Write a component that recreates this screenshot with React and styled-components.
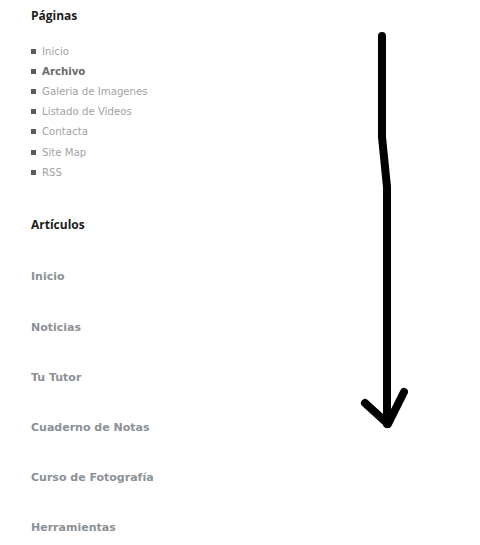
import React from "react";
import styled, { createGlobalStyle } from "styled-components";

const Global = createGlobalStyle`
  html, body { margin: 0; padding: 0; background: #fff; }
  body { font-family: "DejaVu Sans", Verdana, sans-serif; }
`;

const Page = styled.div`
  position: relative;
  width: 480px;
  height: 545px;
  overflow: hidden;
  padding: 8px 0 0 31px;
  box-sizing: border-box;
`;

const Heading = styled.h2`
  margin: 0 0 ${(p) => p.$gap}px 0;
  font-family: "Open Sans", "DejaVu Sans", sans-serif;
  font-size: 12px;
  font-weight: 700;
  line-height: 16px;
  color: #1c1c1c;
`;

const PageList = styled.ul`
  list-style: none;
  margin: 0 0 35px 0;
  padding: 0;
`;

const PageItem = styled.li`
  display: flex;
  align-items: center;
  gap: 6px;
  height: 20.2px;
  font-size: 10.2px;
  color: ${(p) => (p.$strong ? "#6a6a6a" : "#a3a3a3")};
  font-weight: ${(p) => (p.$strong ? 700 : 400)};
`;

const Bullet = styled.span`
  width: 5px;
  height: 5px;
  background: #5a5a5a;
  flex: none;
`;

const ArticleList = styled.ul`
  list-style: none;
  margin: 34px 0 0 0;
  padding: 0;
  display: flex;
  flex-direction: column;
  gap: 30.2px;
`;

const ArticleLink = styled.li`
  height: 20px;
  line-height: 20px;
  font-size: 11px;
  font-weight: 700;
  color: #8b9196;
`;

const Arrow = styled.svg`
  position: absolute;
  left: 0;
  top: 0;
  pointer-events: none;
`;

const pages = [
  ["Inicio"],
  ["Archivo", true],
  ["Galeria de Imagenes"],
  ["Listado de Videos"],
  ["Contacta"],
  ["Site Map"],
  ["RSS"],
];

const articles = [
  "Inicio",
  "Noticias",
  "Tu Tutor",
  "Cuaderno de Notas",
  "Curso de Fotografía",
  "Herramientas",
];

export default function App() {
  return (
    <>
      <Global />
      <Page>
        <Heading $gap={17}>Páginas</Heading>
        <PageList>
          {pages.map(([t, s]) => (
            <PageItem key={t} $strong={s}>
              <Bullet />
              {t}
            </PageItem>
          ))}
        </PageList>
        <Heading $gap={0}>Artículos</Heading>
        <ArticleList>
          {articles.map((a) => (
            <ArticleLink key={a}>{a}</ArticleLink>
          ))}
        </ArticleList>
        <Arrow width="480" height="545" viewBox="0 0 480 545">
          <path
            d="M382 36 L382 137 L387 187 L387 424"
            fill="none"
            stroke="#000"
            strokeWidth="8"
            strokeLinecap="round"
            strokeLinejoin="round"
          />
          <path
            d="M365 403 L388 424 L404 392"
            fill="none"
            stroke="#000"
            strokeWidth="8"
            strokeLinecap="round"
            strokeLinejoin="round"
          />
        </Arrow>
      </Page>
    </>
  );
}
